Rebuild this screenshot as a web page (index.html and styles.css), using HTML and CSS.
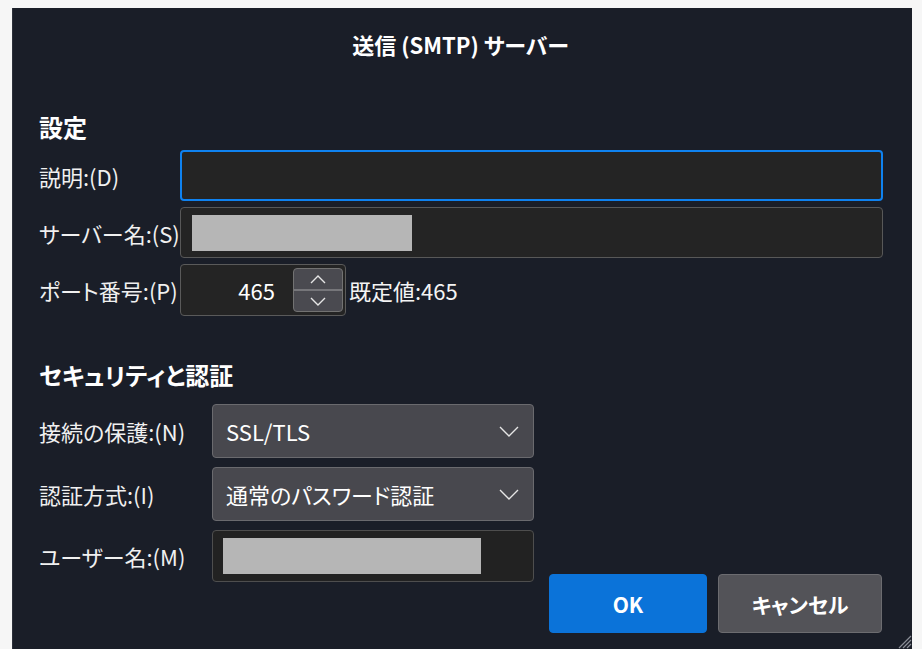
FILE: index.html
```html
<!DOCTYPE html>
<html lang="ja">
<head>
<meta charset="utf-8">
<title>送信 (SMTP) サーバー</title>
<link rel="stylesheet" href="styles.css">
</head>
<body>
<div class="screen">
  <div class="dialog">
    <div class="title">送信 (SMTP) サーバー</div>

    <section class="sec1">
      <h2 class="heading">設定</h2>
      <div class="grid1">
        <label class="label">説明:(D)</label>
        <div class="input focus"></div>

        <label class="label">サーバー名:(S)</label>
        <div class="input"><span class="mask mask-server"></span></div>

        <label class="label">ポート番号:(P)</label>
        <div class="portrow">
          <div class="spin">
            <span class="num">465</span>
            <div class="spinbtns">
              <div class="sb">
                <svg width="16" height="9" viewBox="0 0 16 9"><path d="M1 8 L8 1 L15 8" fill="none" stroke="#e6e6e6" stroke-width="1.4"/></svg>
              </div>
              <div class="sb sb-down">
                <svg width="16" height="9" viewBox="0 0 16 9"><path d="M1 1 L8 8 L15 1" fill="none" stroke="#e6e6e6" stroke-width="1.4"/></svg>
              </div>
            </div>
          </div>
          <span class="default">既定値:465</span>
        </div>
      </div>
    </section>

    <section class="sec2">
      <h2 class="heading">セキュリティと認証</h2>
      <div class="sec2body">
        <div class="grid2">
          <label class="label">接続の保護:(N)</label>
          <div class="select">
            <span>SSL/TLS</span>
            <svg class="chev" width="20" height="11" viewBox="0 0 20 11"><path d="M1 1 L10 10 L19 1" fill="none" stroke="#e6e6e6" stroke-width="1.4"/></svg>
          </div>

          <label class="label">認証方式:(I)</label>
          <div class="select">
            <span>通常のパスワード認証</span>
            <svg class="chev" width="20" height="11" viewBox="0 0 20 11"><path d="M1 1 L10 10 L19 1" fill="none" stroke="#e6e6e6" stroke-width="1.4"/></svg>
          </div>

          <label class="label">ユーザー名:(M)</label>
          <div class="input input-user"><span class="mask mask-user"></span></div>
        </div>
        <div class="buttons">
          <button class="btn btn-ok">OK</button>
          <button class="btn btn-cancel">キャンセル</button>
        </div>
      </div>
    </section>

    <svg class="grip" width="18" height="18" viewBox="0 0 18 18">
      <path d="M17 5 L5 17 M17 9 L9 17 M17 13 L13 17" stroke="#8a8d96" stroke-width="1.2" fill="none"/>
    </svg>
  </div>
</div>
</body>
</html>
```
FILE: styles.css
```css
html, body {
  margin: 0;
  padding: 0;
}
body {
  background: #f6f6f6;
  font-family: "Noto Sans CJK JP", "Noto Sans", sans-serif;
  font-feature-settings: "palt";
  color: #f2f2f2;
  width: 922px;
  height: 649px;
  overflow: hidden;
}
.screen {
  display: flex;
  padding: 8px 10px 0 12px;
  height: 649px;
  box-sizing: border-box;
}
.dialog {
  position: relative;
  width: 900px;
  height: 641px;
  background: #1a1e28;
  box-sizing: border-box;
  padding: 0 30px 0 26px;
  display: flex;
  flex-direction: column;
  border-left: 1px solid #2c303a;
}
.title {
  text-align: center;
  font-size: 22px;
  font-weight: 700;
  line-height: 28px;
  padding-top: 22px;
  color: #ffffff;
}
.heading {
  margin: 0;
  font-size: 24px;
  font-weight: 700;
  line-height: 30px;
  color: #ffffff;
}
.sec1 .heading {
  margin-top: 54px;
  margin-bottom: 8px;
}
.sec2 .heading {
  margin-top: 44px;
  margin-bottom: 14px;
}
.label {
  font-size: 22px;
  line-height: 28px;
  color: #f0f0f0;
  align-self: center;
  white-space: nowrap;
}
.grid1 {
  display: grid;
  grid-template-columns: 141px 1fr;
  grid-template-rows: 51px 51px 52px;
  row-gap: 6px;
  margin-right: -1px;
}
.input {
  background: #242424;
  border: 1px solid #585858;
  border-radius: 4px;
  box-sizing: border-box;
  display: flex;
  align-items: center;
  padding-left: 11px;
}
.input.focus {
  border: 2px solid #0f82f0;
}
.mask {
  display: block;
  height: 36px;
  background: #b6b6b6;
}
.mask-server { width: 220px; }
.mask-user { width: 258px; }

.portrow {
  display: flex;
  align-items: center;
  gap: 3px;
}
.spin {
  width: 166px;
  height: 52px;
  box-sizing: border-box;
  border: 1px solid #5a5a5a;
  border-radius: 4px;
  background: #242424;
  display: flex;
  padding: 3px 2px 3px 0;
}
.num {
  flex: 1;
  text-align: right;
  padding-right: 18px;
  font-size: 22px;
  line-height: 44px;
  color: #ffffff;
}
.spinbtns {
  width: 50px;
  box-sizing: border-box;
  border: 1px solid #727272;
  border-radius: 4px;
  background: #4a4a50;
  display: flex;
  flex-direction: column;
  overflow: hidden;
}
.sb {
  flex: 1;
  display: flex;
  align-items: center;
  justify-content: center;
}
.sb-down {
  border-top: 2px solid #76767a;
}
.default {
  font-size: 22px;
  line-height: 28px;
  color: #f4f4f4;
}

.sec2body {
  display: flex;
  align-items: flex-end;
}
.grid2 {
  display: grid;
  grid-template-columns: 173px 322px;
  grid-template-rows: 54px 54px 52px;
  row-gap: 9px;
  margin-bottom: 51px;
}
.select {
  background: #48484e;
  border: 1px solid #6a6a6e;
  border-radius: 4px;
  box-sizing: border-box;
  display: flex;
  align-items: center;
  justify-content: space-between;
  padding: 0 14px 0 13px;
  font-size: 22px;
  color: #ffffff;
}
.chev { display: block; }
.input-user {
  padding-left: 10px;
  border-color: #4e4e4e;
  background: #222222;
}
.buttons {
  margin-left: auto;
  display: flex;
  gap: 11px;
}
.btn {
  height: 59px;
  border-radius: 4px;
  font-family: "Noto Sans CJK JP", "Noto Sans", sans-serif;
  font-feature-settings: "palt";
  font-size: 21px;
  font-weight: 700;
  color: #ffffff;
  box-sizing: border-box;
  cursor: default;
}
.btn-ok {
  width: 158px;
  background: #0b73d9;
  border: 1px solid #0b73d9;
}
.btn-cancel {
  width: 164px;
  background: #535358;
  border: 1px solid #6c6c70;
}
.grip {
  position: absolute;
  right: 0;
  bottom: 0;
}
```
